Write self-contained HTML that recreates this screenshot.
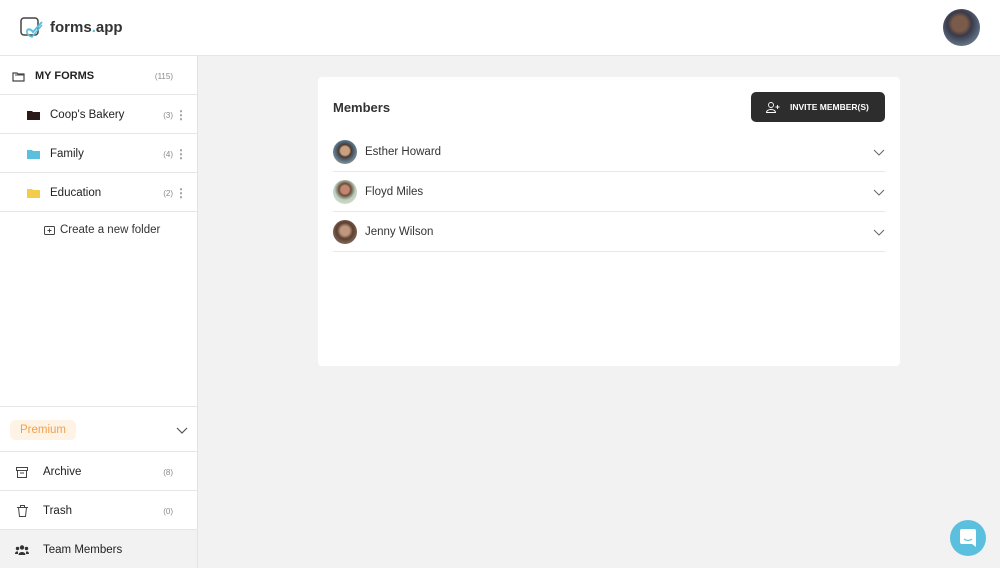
<!DOCTYPE html>
<html><head><meta charset="utf-8"><style>
*{box-sizing:border-box;margin:0;padding:0}
body{width:1000px;height:568px;overflow:hidden;background:#f2f2f2;font-family:"Liberation Sans",sans-serif;color:#222;position:relative}
.hdr{position:absolute;left:0;top:0;width:1000px;height:56px;background:#fff;border-bottom:1px solid #e6e6e6}
.side{position:absolute;left:0;top:56px;width:198px;height:512px;background:#fff;border-right:1px solid #e2e2e2}
.row{position:absolute;left:0;width:197px;border-bottom:1px solid #e6e6e6;display:flex;align-items:center;font-size:11.5px;padding-top:2px}
.cnt{position:absolute;right:24px;font-size:8px;color:#888}
.dots{position:absolute;right:10px;color:#999;font-size:12px;line-height:1;font-weight:bold}
.card{position:absolute;left:318px;top:77px;width:582px;height:289px;background:#fff;border-radius:4px}
.mem{position:absolute;left:15px;width:552px;height:40px;border-bottom:1px solid #e8e8e8;display:flex;align-items:center;font-size:11.5px;color:#333}
.av{width:24px;height:24px;border-radius:50%;margin-right:8px}
.chev{position:absolute;right:0;top:17px}
</style></head><body>
<div class="hdr">
 <svg style="position:absolute;left:20px;top:17px" width="26" height="22" viewBox="0 0 26 22"><rect x="1" y="1" width="17" height="17" rx="3" fill="none" stroke="#444" stroke-width="1.5"/><path d="M7 13 Q10 11 13 15 L22 5" fill="none" stroke="#5bc0de" stroke-width="2"/><path d="M7 13 Q6 18 12 20 L22 8" fill="none" stroke="#5bc0de" stroke-width="1.5"/></svg>
 <div style="position:absolute;left:50px;top:19px;font-size:15px;font-weight:bold;color:#333">forms<span style="color:#5bc0de">.</span>app</div>
 <div style="position:absolute;left:943px;top:9px;width:37px;height:37px;border-radius:50%;background:radial-gradient(circle at 45% 40%,#7a5a48 0 25%,#3a3a48 40%,#5d6f85 70%,#c2582e 95%)"></div>
</div>
<div class="side">
 <div class="row" style="top:0;height:39px"><svg style="margin-left:12px" width="13" height="11" viewBox="0 0 13 11"><path d="M1 2h4l1 1h6v7H1z" fill="none" stroke="#444" stroke-width="1.2"/><path d="M3 4h9" stroke="#444"/></svg><b style="margin-left:10px;font-size:11px">MY FORMS</b><span class="cnt">(115)</span></div>
 <div class="row" style="top:39px;height:39px"><svg style="margin-left:27px" width="13" height="10"><path d="M0 1h5l1 1h7v8H0z" fill="#2a1a1a"/></svg><span style="margin-left:10px">Coop's Bakery</span><span class="cnt">(3)</span><span class="dots">⋮</span></div>
 <div class="row" style="top:78px;height:39px"><svg style="margin-left:27px" width="13" height="10"><path d="M0 1h5l1 1h7v8H0z" fill="#5bc0de"/></svg><span style="margin-left:10px">Family</span><span class="cnt">(4)</span><span class="dots">⋮</span></div>
 <div class="row" style="top:117px;height:39px"><svg style="margin-left:27px" width="13" height="10"><path d="M0 1h5l1 1h7v8H0z" fill="#f5cc4a"/></svg><span style="margin-left:10px">Education</span><span class="cnt">(2)</span><span class="dots">⋮</span></div>
 <div style="position:absolute;left:44px;top:168px;font-size:11.5px;color:#333;display:flex;align-items:center"><svg width="11" height="10"><rect x=".5" y="1.5" width="10" height="8" rx="1" fill="none" stroke="#444"/><path d="M5.5 3.5v4M3.5 5.5h4" stroke="#444"/></svg><span style="margin-left:5px">Create a new folder</span></div>
 <div class="row" style="top:350px;height:46px;border-top:1px solid #e6e6e6"><span style="margin-left:10px;background:#fff3e6;color:#f0a04b;font-size:11.5px;padding:4px 10px;border-radius:5px">Premium</span><svg style="position:absolute;right:9px" width="12" height="7"><path d="M1 1l5 5 5-5" fill="none" stroke="#555" stroke-width="1.2"/></svg></div>
 <div class="row" style="top:396px;height:39px"><svg style="margin-left:16px" width="12" height="11"><rect x=".5" y=".5" width="11" height="3" fill="none" stroke="#444"/><path d="M1.5 3.5v7h9v-7M4 6h4" fill="none" stroke="#444"/></svg><span style="margin-left:15px">Archive</span><span class="cnt">(8)</span></div>
 <div class="row" style="top:435px;height:39px"><svg style="margin-left:17px" width="11" height="12"><path d="M0 2.5h11M3.5 2.5V.5h4v2M1.5 2.5l1 9h6l1-9" fill="none" stroke="#444"/></svg><span style="margin-left:15px">Trash</span><span class="cnt">(0)</span></div>
 <div class="row" style="top:474px;height:38px;background:#f2f2f2;border-bottom:none"><svg style="margin-left:15px" width="14" height="10"><circle cx="7" cy="2.5" r="2.2" fill="#333"/><circle cx="2.5" cy="3.5" r="1.7" fill="#333"/><circle cx="11.5" cy="3.5" r="1.7" fill="#333"/><path d="M3.5 10c0-4 7-4 7 0zM0 9c0-3 3-3 3-2v2zM14 9c0-3-3-3-3-2v2z" fill="#333"/></svg><span style="margin-left:14px">Team Members</span></div>
</div>
<div class="card">
 <div style="position:absolute;left:15px;top:23px;font-size:13px;font-weight:bold;color:#333">Members</div>
 <div style="position:absolute;left:433px;top:15px;width:134px;height:30px;background:#2d2d2d;border-radius:5px;color:#fff;font-size:8.5px;font-weight:bold;display:flex;align-items:center"><svg style="margin-left:15px" width="14" height="11"><circle cx="5" cy="3" r="2.5" fill="none" stroke="#fff" stroke-width=".9"/><path d="M.5 10.5c0-4 9-4 9 0z" fill="none" stroke="#fff" stroke-width=".9"/><path d="M11.5 3v4M9.5 5h4" stroke="#fff" stroke-width=".9"/></svg><span style="margin-left:10px">INVITE MEMBER(S)</span></div>
 <div class="mem" style="top:55px;padding-top:1px"><div class="av" style="background:radial-gradient(circle at 50% 45%,#c9a080 0 25%,#4a3a30 35%,#5a7a95 60%,#d6a940 90%)"></div>Esther Howard<svg class="chev" width="12" height="7"><path d="M1 1l5 5 5-5" fill="none" stroke="#666" stroke-width="1"/></svg></div>
 <div class="mem" style="top:95px;padding-top:1px"><div class="av" style="background:radial-gradient(circle at 50% 40%,#c08870 0 22%,#6b4a3a 32%,#b8d0c0 55%,#e8e0d0 90%)"></div>Floyd Miles<svg class="chev" width="12" height="7"><path d="M1 1l5 5 5-5" fill="none" stroke="#666" stroke-width="1"/></svg></div>
 <div class="mem" style="top:135px;padding-top:1px"><div class="av" style="background:radial-gradient(circle at 50% 45%,#c09880 0 25%,#5a4030 45%,#8a7060 80%)"></div>Jenny Wilson<svg class="chev" width="12" height="7"><path d="M1 1l5 5 5-5" fill="none" stroke="#666" stroke-width="1"/></svg></div>
</div>
<div style="position:absolute;left:950px;top:520px;width:36px;height:36px;border-radius:50%;background:#5bbfde"><svg style="position:absolute;left:10px;top:9px" width="16" height="18"><path d="M2 0h12a2 2 0 0 1 2 2v16l-4-3H2a2 2 0 0 1-2-2V2a2 2 0 0 1 2-2z" fill="#fff"/><path d="M4 10q4 3 8 0" fill="none" stroke="#5bbfde" stroke-width="1.2"/></svg></div>
</body></html>
